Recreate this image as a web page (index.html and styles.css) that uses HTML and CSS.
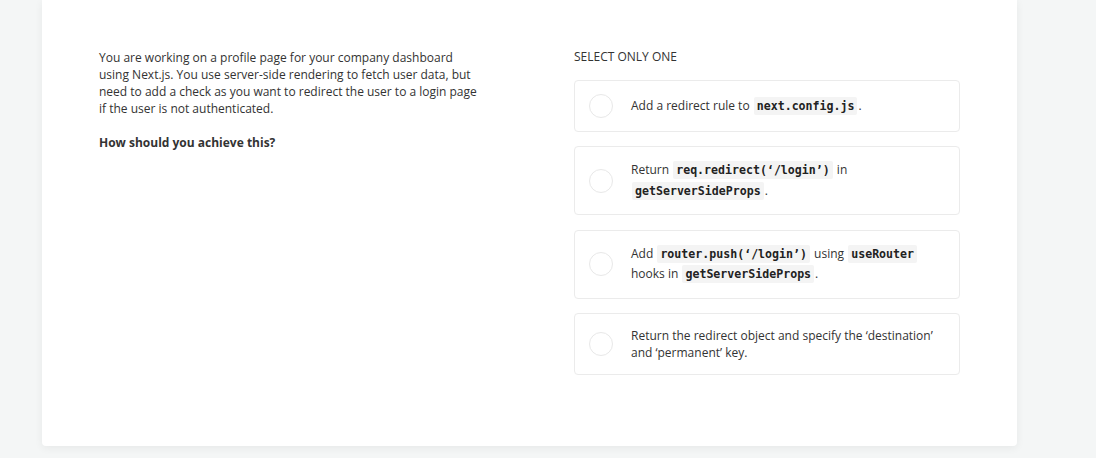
FILE: index.html
```html
<!DOCTYPE html>
<html>
<head>
<meta charset="utf-8">
<link rel="stylesheet" href="styles.css">
</head>
<body>
<div class="page">
  <div class="card">
    <div class="question">
      <p class="prompt">You are working on a profile page for your company dashboard using Next.js. You use server-side rendering to fetch user data, but need to add a check as you want to redirect the user to a login page if the user is not authenticated.</p>
      <p class="ask">How should you achieve this?</p>
    </div>
    <div class="answers">
      <div class="label">SELECT ONLY ONE</div>
      <div class="options">
        <div class="option">
          <span class="radio"></span>
          <div class="text">Add a redirect rule to <code>next.config.js</code>.</div>
        </div>
        <div class="option">
          <span class="radio"></span>
          <div class="text tall">Return <code>req.redirect(‘/login’)</code> in <code>getServerSideProps</code>.</div>
        </div>
        <div class="option">
          <span class="radio"></span>
          <div class="text tall">Add <code>router.push(‘/login’)</code> using <code>useRouter</code> hooks in <code>getServerSideProps</code>.</div>
        </div>
        <div class="option">
          <span class="radio"></span>
          <div class="text">Return the redirect object and specify the ‘destination’ and ‘permanent’ key.</div>
        </div>
      </div>
    </div>
  </div>
</div>
</body>
</html>
```
FILE: styles.css
```css
html, body {
  margin: 0;
  padding: 0;
  background: #f4f6f6;
  font-family: "Open Sans", "Liberation Sans", sans-serif;
  color: #333;
  font-size: 12px;
}
.page {
  width: 1096px;
  height: 458px;
  overflow: hidden;
}
.card {
  margin-left: 42px;
  width: 975px;
  height: 446px;
  box-sizing: border-box;
  background: #fff;
  border-radius: 0 0 4px 4px;
  box-shadow: 0 2px 8px rgba(0, 0, 0, 0.06);
  padding: 49px 57px 0 57px;
  display: grid;
  grid-template-columns: 384px 386px;
  column-gap: 91px;
  align-items: start;
}
.prompt {
  margin: 0;
  line-height: 17px;
}
.ask {
  margin: 17px 0 0;
  line-height: 17px;
  font-weight: 700;
}
.label {
  line-height: 17px;
  margin-top: -1px;
  margin-bottom: 15px;
}
.options {
  display: flex;
  flex-direction: column;
  gap: 14.4px;
}
.option {
  display: flex;
  align-items: center;
  gap: 18px;
  border: 1px solid #ebebeb;
  border-radius: 4px;
  padding: 13px 14px;
  min-height: 24px;
}
.radio {
  flex: none;
  width: 22px;
  height: 22px;
  border: 1px solid #e8e8e8;
  border-radius: 50%;
}
.text {
  line-height: 17px;
  padding-right: 8px;
}
.text.tall {
  line-height: 20.5px;
}
code {
  font-family: "DejaVu Sans Mono", "Liberation Mono", monospace;
  font-weight: 700;
  font-size: 11.6px;
  background: #f4f4f4;
  color: #222;
  padding: 2px 3px;
  margin: 0 1px;
  border-radius: 2px;
}
```
